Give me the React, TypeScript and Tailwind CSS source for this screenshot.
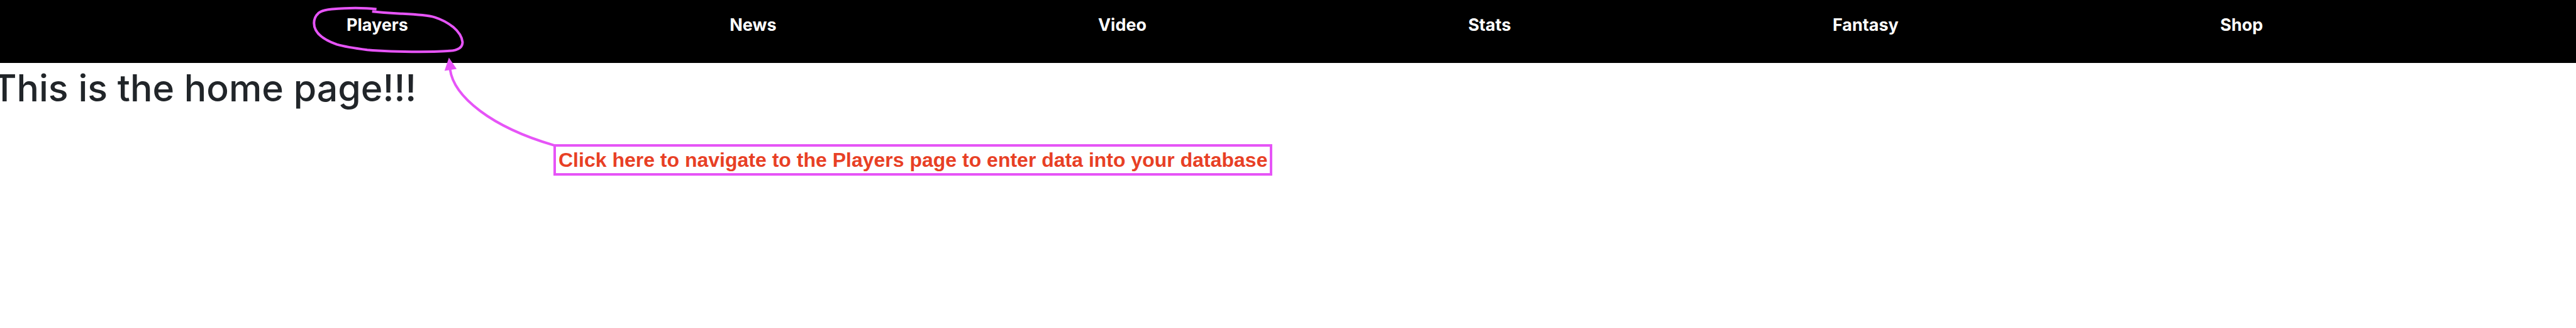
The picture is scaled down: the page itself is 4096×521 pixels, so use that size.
const links = ["Players", "News", "Video", "Stats", "Fantasy", "Shop"];

function Markup() {
  return (
    <svg
      className="pointer-events-none absolute top-0 left-[466px] h-[241px] w-[434px]"
      viewBox="0 0 1620 900"
      fill="none"
      stroke="#e654f7"
      strokeWidth="15"
      aria-hidden="true"
    >
      <path d="M495 54C440 48 405 48 370 48C310 48 270 51 230 54C190 57 165 66 150 78C130 96 124 115 124 137C124 190 170 232 260 264C310 279 370 287 440 296C520 303 640 307 750 307C820 307 880 307 930 302C980 298 1006 280 1006 250C1002 215 985 190 950 160C915 132 875 113 840 102C790 88 720 85 640 81C590 79 540 76 469 68" />
      <path d="M932 412C953 570 1170 752 1550 862" />
      <path d="M925 342L971 409L899 420Z" fill="#e654f7" stroke="none" />
    </svg>
  );
}

export default function App() {
  return (
    <div className="relative min-h-screen overflow-hidden bg-white font-['Inter',sans-serif]">
      <header className="bg-black">
        <nav aria-label="Main">
          <ul className="flex h-[100px] justify-between pt-[19px] pr-[12.15%] pl-[13.45%]">
            {links.map((label) => (
              <li key={label}>
                <a href={"#" + label.toLowerCase()} className="block text-[27px] leading-[42px] font-bold text-white">
                  {label}
                </a>
              </li>
            ))}
          </ul>
        </nav>
      </header>
      <main>
        <h1 className="-ml-3 text-[59px] leading-[80px] font-medium text-[#212529]">This is the home page!!!</h1>
        <p className="mt-[49px] ml-[880px] w-fit border-4 border-[#e654f7] px-1 font-['Liberation_Sans',sans-serif] text-[32px] leading-[42px] font-bold whitespace-nowrap text-[#e84025]">
          Click here to navigate to the Players page to enter data into your database
        </p>
      </main>
      <Markup />
    </div>
  );
}
